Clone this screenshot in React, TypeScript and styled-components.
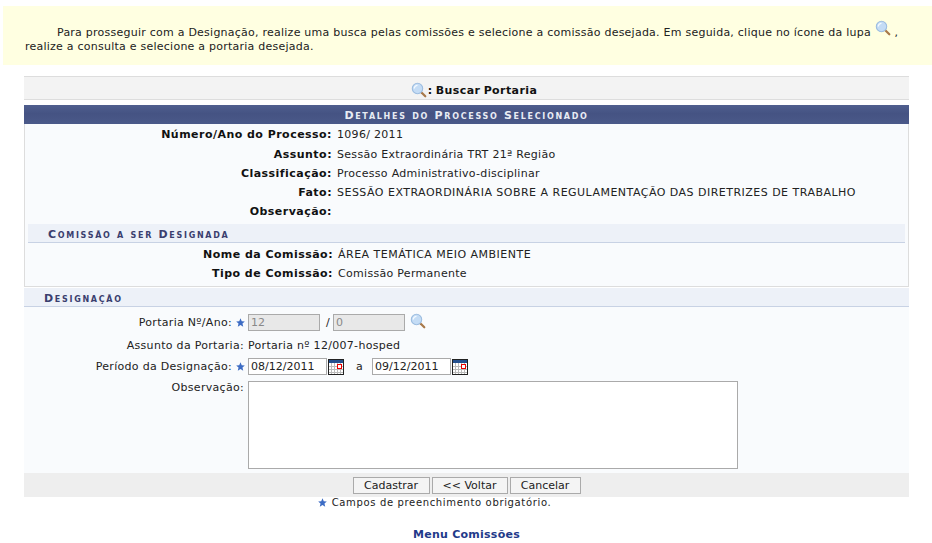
import React from 'react';
import styled, { createGlobalStyle } from 'styled-components';

const GlobalStyle = createGlobalStyle`
	html, body {
		margin: 0;
		padding: 0;
		background: #fff;
	}
	body {
		font-family: "DejaVu Sans", Verdana, sans-serif;
		font-size: 11px;
		letter-spacing: 0.3px;
		color: #222;
	}
`;

const Page = styled.div`
	width: 932px;
	height: 543px;
	overflow: hidden;
	padding-top: 6px;
	box-sizing: border-box;
`;

const Notice = styled.p`
	margin: 0 0 11px 3px;
	height: 59px;
	box-sizing: border-box;
	padding: 14px 30px 0 22px;
	background: #ffffe1;
	line-height: 14px;
	letter-spacing: 0.24px;
	text-indent: 32px;
	color: #222;
`;

const Content = styled.div`
	width: 885px;
	margin-left: 24px;
`;

const TitleBar = styled.div`
	height: 24px;
	box-sizing: border-box;
	border-top: 1px solid #ddd;
	border-bottom: 1px solid #ddd;
	padding: 4px 0 0 15px;
	background: #f3f3f3;
	display: flex;
	align-items: center;
	justify-content: center;
	gap: 1px;
	font-weight: bold;
	letter-spacing: 0.42px;
	word-spacing: -1px;
	color: #111;
	margin-bottom: 5px;
`;

const Caption = styled.div`
	height: 19px;
	box-sizing: border-box;
	padding-top: 1px;
	background: linear-gradient(#4f5e8e, #455383 45%, #4a5989);
	color: #e8ecf4;
	display: flex;
	align-items: center;
	justify-content: center;
	font-weight: bold;
	font-size: 11px;
	font-variant: small-caps;
	letter-spacing: 1.7px;
`;

const Details = styled.div`
	height: 163px;
	box-sizing: border-box;
	background: #f9fbfd;
	border: 1px solid #ddd;
	border-top: 0;
	padding: 1.4px 3px 0;
`;

const InfoRow = styled.div<{ $labelWidth: number }>`
	height: 19.2px;
	display: grid;
	grid-template-columns: ${(p) => p.$labelWidth}px 1fr;
	column-gap: 5px;
	align-items: center;
`;

const InfoLabel = styled.span`
	text-align: right;
	font-weight: bold;
	letter-spacing: 0.47px;
	color: #111;
`;

const InfoValue = styled.span<{ $caps?: boolean }>`
	color: #222;
	letter-spacing: ${(p) => (p.$caps ? '0.48px' : '0.3px')};
`;

const SubHeading = styled.div<{ $inset: number; $margin: string }>`
	height: 19px;
	box-sizing: border-box;
	margin: ${(p) => p.$margin};
	padding: 2px 0 0 ${(p) => p.$inset}px;
	background: #edf1f8;
	border-bottom: 1px solid #c8d2e4;
	color: #3a3e6e;
	font-weight: bold;
	font-size: 11px;
	font-variant: small-caps;
	letter-spacing: 1.7px;
	display: flex;
	align-items: center;
`;

const FormArea = styled.div`
	height: 166px;
	box-sizing: border-box;
	padding-top: 5px;
	background: #f9fbfd;
`;

const FormRow = styled.div<{ $offset?: number }>`
	height: 21px;
	margin-top: ${(p) => p.$offset ?? 0}px;
	display: flex;
	align-items: center;
`;

const FormLabel = styled.span<{ $wide?: boolean }>`
	width: ${(p) => (p.$wide ? 220 : 208)}px;
	text-align: right;
	flex: none;
`;

const RequiredMark = styled.span`
	width: 16px;
	flex: none;
	display: flex;
	justify-content: center;
`;

const StaticValue = styled.span`
	margin-left: 4px;
`;

const TextField = styled.input<{ $width: number }>`
	width: ${(p) => p.$width}px;
	height: 17px;
	box-sizing: border-box;
	margin: 0;
	padding: 1px 2px;
	border: 1px solid #aaa;
	border-radius: 0;
	background: ${(p) => (p.disabled ? '#e8e8e8' : '#fff')};
	color: ${(p) => (p.disabled ? '#888' : '#222')};
	font-family: inherit;
	font-size: 11px;
	outline: none;
`;

const Slash = styled.span`
	margin: 0 3px 0 6px;
`;

const Between = styled.span`
	margin: 0 9px 0 12px;
`;

const LookupIcon = styled.span`
	display: flex;
	margin: -4px 0 0 5px;
`;

const ObsRow = styled.div`
	display: flex;
	align-items: flex-start;
	margin-top: 4px;
`;

const ObsLabel = styled.span`
	width: 220px;
	padding-right: 4px;
	text-align: right;
	flex: none;
`;

const ObsBox = styled.textarea`
	width: 490px;
	height: 88px;
	box-sizing: border-box;
	margin: 0;
	padding: 2px;
	border: 1px solid #aaa;
	border-radius: 0;
	background: #fff;
	resize: none;
	outline: none;
`;

const ButtonBar = styled.div`
	height: 24px;
	background: #eee;
	display: flex;
	justify-content: center;
	align-items: center;
	gap: 2px;
`;

const FormButton = styled.button<{ $width: number }>`
	width: ${(p) => p.$width}px;
	height: 17px;
	box-sizing: border-box;
	padding: 0;
	margin: 0;
	border: 1px solid #aaa;
	background: #f4f4f4;
	color: #222;
	font-family: inherit;
	font-size: 11px;
	line-height: 13px;
	border-radius: 0;
`;

const Legend = styled.div`
	height: 11px;
	display: flex;
	align-items: center;
	justify-content: center;
	gap: 5px;
	padding-right: 64px;
	font-size: 10px;
	letter-spacing: 0.65px;
	color: #222;
`;

const MenuLink = styled.a`
	display: block;
	margin-top: 20px;
	text-align: center;
	font-weight: bold;
	letter-spacing: 0.25px;
	color: #1f3a8a;
	text-decoration: none;
`;

function Lens() {
	return (
		<svg width="16" height="16" viewBox="0 0 16 16" style={{ flex: 'none' }}>
			<line x1="10.5" y1="10.5" x2="14.3" y2="14.3" stroke="#a8794a" strokeWidth="2.2" strokeLinecap="round" />
			<circle cx="6.5" cy="6.5" r="5.2" fill="#c4dcf5" stroke="#9dbde0" strokeWidth="1.1" />
			<path d="M3.3 6.5a3.2 3.2 0 0 1 3.2-3.2" fill="none" stroke="#f4faff" strokeWidth="1.3" />
		</svg>
	);
}

function Star() {
	return (
		<svg width="9" height="9" viewBox="0 0 10 10" style={{ flex: 'none' }}>
			<path d="M5 0.3 6.4 3.6 9.8 3.9 7.2 6.1 8 9.6 5 7.7 2 9.6 2.8 6.1 0.2 3.9 3.6 3.6Z" fill="#3d6cc4" />
		</svg>
	);
}

function CalendarIcon() {
	return (
		<svg width="16" height="16" viewBox="0 0 16 16" style={{ flex: 'none', marginLeft: 1 }}>
			<rect x="0" y="0" width="16" height="16" fill="#222" />
			<rect x="1" y="1" width="14" height="14" fill="#fff" />
			<rect x="1" y="1" width="14" height="3" fill="#24508f" />
			<path d="M1 7.5h14M1 10.5h14M1 13.5h14M3.5 4v11M6.5 4v11M9.5 4v11M12.5 4v11" stroke="#bbb" strokeWidth="1" fill="none" />
			<rect x="9.5" y="5.5" width="4" height="4" fill="#fff" stroke="#e00" strokeWidth="1" />
		</svg>
	);
}

const processInfo = [
	{ label: 'Número/Ano do Processo:', value: '1096/ 2011' },
	{ label: 'Assunto:', value: 'Sessão Extraordinária TRT 21ª Região' },
	{ label: 'Classificação:', value: 'Processo Administrativo-disciplinar' },
	{ label: 'Fato:', value: 'SESSÃO EXTRAORDINÁRIA SOBRE A REGULAMENTAÇÃO DAS DIRETRIZES DE TRABALHO', caps: true },
	{ label: 'Observação:', value: '' },
];

const commissionInfo = [
	{ label: 'Nome da Comissão:', value: 'ÁREA TEMÁTICA MEIO AMBIENTE', caps: true },
	{ label: 'Tipo de Comissão:', value: 'Comissão Permanente' },
];

function App() {
	return (
		<Page>
			<GlobalStyle />
			<Notice>
				Para prosseguir com a Designação, realize uma busca pelas comissões e selecione a comissão desejada. Em
				seguida, clique no ícone da lupa <Lens /> , realize a consulta e selecione a portaria desejada.
			</Notice>
			<Content>
				<TitleBar>
					<Lens />
					<span>: Buscar Portaria</span>
				</TitleBar>
				<Caption>Detalhes do Processo Selecionado</Caption>
				<Details>
					{processInfo.map(({ label, value, caps }) => (
						<InfoRow key={label} $labelWidth={304}>
							<InfoLabel>{label}</InfoLabel>
							<InfoValue $caps={caps}>{value}</InfoValue>
						</InfoRow>
					))}
					<SubHeading $inset={20} $margin="3px 0 1.6px">
						Comissão a ser Designada
					</SubHeading>
					{commissionInfo.map(({ label, value, caps }) => (
						<InfoRow key={label} $labelWidth={305}>
							<InfoLabel>{label}</InfoLabel>
							<InfoValue $caps={caps}>{value}</InfoValue>
						</InfoRow>
					))}
				</Details>
				<SubHeading $inset={20} $margin="1px 0 0">
					Designação
				</SubHeading>
				<FormArea>
					<FormRow>
						<FormLabel>Portaria Nº/Ano:</FormLabel>
						<RequiredMark>
							<Star />
						</RequiredMark>
						<TextField $width={72} value="12" disabled readOnly />
						<Slash>/</Slash>
						<TextField $width={72} value="0" disabled readOnly />
						<LookupIcon>
							<Lens />
						</LookupIcon>
					</FormRow>
					<FormRow $offset={2}>
						<FormLabel $wide>Assunto da Portaria:</FormLabel>
						<StaticValue>Portaria nº 12/007-hosped</StaticValue>
					</FormRow>
					<FormRow>
						<FormLabel>Período da Designação:</FormLabel>
						<RequiredMark>
							<Star />
						</RequiredMark>
						<TextField $width={79} defaultValue="08/12/2011" />
						<CalendarIcon />
						<Between>a</Between>
						<TextField $width={79} defaultValue="09/12/2011" />
						<CalendarIcon />
					</FormRow>
					<ObsRow>
						<ObsLabel>Observação:</ObsLabel>
						<ObsBox />
					</ObsRow>
				</FormArea>
				<ButtonBar>
					<FormButton $width={77}>Cadastrar</FormButton>
					<FormButton $width={76}>&lt;&lt; Voltar</FormButton>
					<FormButton $width={71}>Cancelar</FormButton>
				</ButtonBar>
				<Legend>
					<Star />
					<span>Campos de preenchimento obrigatório.</span>
				</Legend>
				<MenuLink href="#">Menu Comissões</MenuLink>
			</Content>
		</Page>
	);
}

export default App;
